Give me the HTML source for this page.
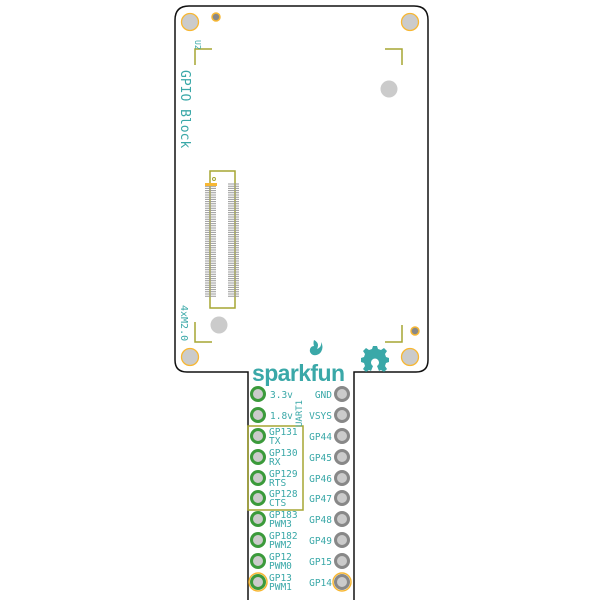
<!DOCTYPE html><html><head><style>body{margin:0;background:#fff}svg{display:block}text{font-family:"DejaVu Sans Mono","Liberation Mono",monospace;fill:#3aa8a8}</style></head><body>
<svg width="600" height="600" viewBox="0 0 600 600">
<path d="M248,600 L248,372 L187,372 Q175,372 175,360 L175,20 Q175,6 189,6 L414,6 Q428,6 428,20 L428,360 Q428,372 416,372 L354,372 L354,600" fill="#fff" stroke="#111" stroke-width="1.5"/>
<g fill="#cbcbcb" stroke="#f7b733" stroke-width="1.3">
<circle cx="190" cy="22" r="8.5"/><circle cx="410" cy="22" r="8.5"/><circle cx="190" cy="357" r="8.5"/><circle cx="410" cy="357" r="8.5"/></g>
<circle cx="216" cy="17" r="4" fill="#888" stroke="#f7b733" stroke-width="1.5"/>
<circle cx="415" cy="331" r="4" fill="#888" stroke="#f7b733" stroke-width="1.5"/>
<circle cx="389" cy="89" r="8.5" fill="#cbcbcb"/><circle cx="219" cy="325" r="8.5" fill="#cbcbcb"/>
<g fill="none" stroke="#a6a632" stroke-width="1.5">
<path d="M212,49 H195 V65"/><path d="M385,49 H402 V65"/><path d="M195,322 V342 H212"/><path d="M402,325 V342 H385"/>
<rect x="210" y="171" width="25" height="137"/><rect x="248" y="426" width="55" height="84"/></g>
<circle cx="214" cy="179" r="1.5" fill="none" stroke="#a6a632"/>
<g stroke="#999" stroke-width="1">
<path id="pl" d="M205,184h11M205,186.2h11M205,188.4h11M205,190.6h11M205,192.8h11M205,195h11M205,197.2h11M205,199.4h11M205,201.6h11M205,203.8h11M205,206h11M205,208.2h11M205,210.4h11M205,212.6h11M205,214.8h11M205,217h11M205,219.2h11M205,221.4h11M205,223.6h11M205,225.8h11M205,228h11M205,230.2h11M205,232.4h11M205,234.6h11M205,236.8h11M205,239h11M205,241.2h11M205,243.4h11M205,245.6h11M205,247.8h11M205,250h11M205,252.2h11M205,254.4h11M205,256.6h11M205,258.8h11M205,261h11M205,263.2h11M205,265.4h11M205,267.6h11M205,269.8h11M205,272h11M205,274.2h11M205,276.4h11M205,278.6h11M205,280.8h11M205,283h11M205,285.2h11M205,287.4h11M205,289.6h11M205,291.8h11M205,294h11M205,296.2h11"/>
<use href="#pl" x="23"/></g>
<rect x="205" y="183" width="12" height="3" fill="#f7b733"/>
<text transform="translate(181,70) rotate(90)" font-size="13">GPIO Block</text>
<text transform="translate(195,40) rotate(90)" font-size="8">U2</text>
<text transform="translate(181,305) rotate(90)" font-size="10">4xM2.0</text>
<text transform="translate(302,427) rotate(-90)" font-size="9">UART1</text>
<text x="252" y="381" font-weight="bold" font-size="23" style="font-family:'Liberation Sans',sans-serif" textLength="93">sparkfun</text>
<path d="M314,340 q6,3 3,9 q5,-2 4,-7 q3,5 0,10 q-3,4 -8,3 q-4,-2 -3,-6 q1,-3 4,-3 q-1,-3 0,-6z" fill="#3aa8a8"/>
<g transform="translate(375,357)" fill="#3aa8a8"><path d="M-2,-11h4l1,3 3,1 3,-2 3,3 -2,3 1,3 3,1v4l-3,1 -1,3 2,3 -3,3 -3,-2 -2,1 -2,-5 a4,4 0 1 0 -4,0 l-2,5 -2,-1 -3,2 -3,-3 2,-3 -1,-3 -3,-1v-4l3,-1 1,-3 -2,-3 3,-3 3,2 3,-1z"/></g>
<g stroke-width="3">
<g fill="#cbcbcb" stroke="#3b9a3b">
<circle cx="258" cy="394" r="6.5"/><circle cx="258" cy="415" r="6.5"/><circle cx="258" cy="436" r="6.5"/><circle cx="258" cy="457" r="6.5"/><circle cx="258" cy="478" r="6.5"/><circle cx="258" cy="498" r="6.5"/><circle cx="258" cy="519" r="6.5"/><circle cx="258" cy="540" r="6.5"/><circle cx="258" cy="561" r="6.5"/><circle cx="258" cy="582" r="6.5"/></g>
<g fill="#cbcbcb" stroke="#888">
<circle cx="342" cy="394" r="6.5"/><circle cx="342" cy="415" r="6.5"/><circle cx="342" cy="436" r="6.5"/><circle cx="342" cy="457" r="6.5"/><circle cx="342" cy="478" r="6.5"/><circle cx="342" cy="498" r="6.5"/><circle cx="342" cy="519" r="6.5"/><circle cx="342" cy="540" r="6.5"/><circle cx="342" cy="561" r="6.5"/><circle cx="342" cy="582" r="6.5"/></g></g>
<circle cx="258" cy="582" r="9" fill="none" stroke="#f7b733" stroke-width="1.5"/><circle cx="342" cy="582" r="9" fill="none" stroke="#f7b733" stroke-width="1.5"/>
<g font-size="9.5">
<text x="270" y="398">3.3v</text><text x="270" y="419">1.8v</text>
<text x="269" y="435">GP131</text><text x="269" y="444">TX</text>
<text x="269" y="456">GP130</text><text x="269" y="465">RX</text>
<text x="269" y="477">GP129</text><text x="269" y="486">RTS</text>
<text x="269" y="497">GP128</text><text x="269" y="506">CTS</text>
<text x="269" y="518">GP183</text><text x="269" y="527">PWM3</text>
<text x="269" y="539">GP182</text><text x="269" y="548">PWM2</text>
<text x="269" y="560">GP12</text><text x="269" y="569">PWM0</text>
<text x="269" y="581">GP13</text><text x="269" y="590">PWM1</text>
<g text-anchor="end"><text x="332" y="398">GND</text><text x="332" y="419">VSYS</text><text x="332" y="440">GP44</text><text x="332" y="461">GP45</text><text x="332" y="482">GP46</text><text x="332" y="502">GP47</text><text x="332" y="523">GP48</text><text x="332" y="544">GP49</text><text x="332" y="565">GP15</text><text x="332" y="586">GP14</text></g></g>
</svg></body></html>
